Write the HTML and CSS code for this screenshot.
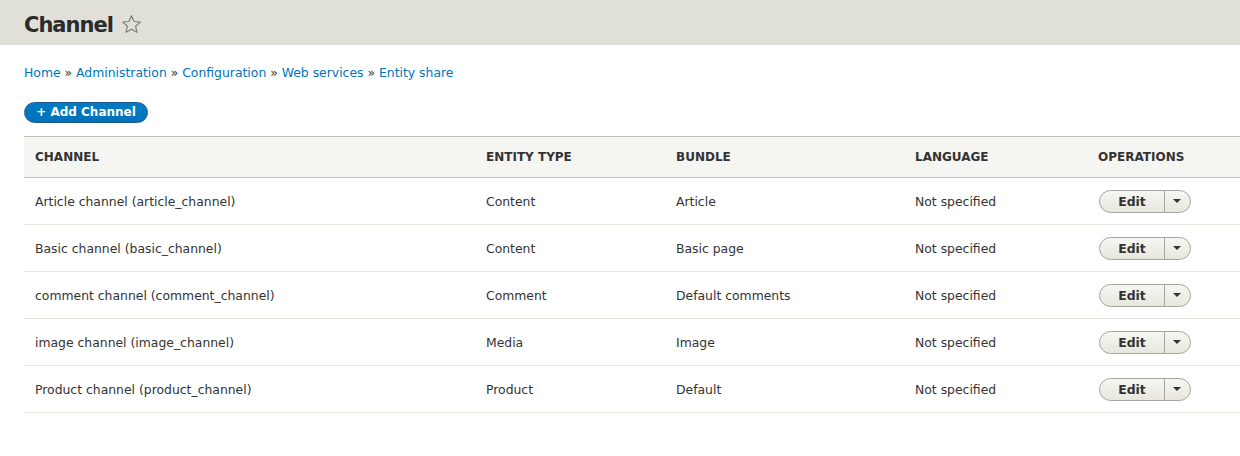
FILE: index.html
```html
<!DOCTYPE html>
<html>
<head>
<meta charset="utf-8">
<link rel="stylesheet" href="styles.css">
</head>
<body>
<header class="page-head">
  <h1 class="title">Channel</h1>
  <svg class="star" width="21" height="21" viewBox="0 0 20 20"><path d="M10 1.6l2.5 5.5 5.8.55-4.4 4 1.3 5.8L10 14.5 4.8 17.45l1.3-5.8-4.4-4 5.8-.55z" fill="none" stroke="#7d7d70" stroke-width="1.1" stroke-linejoin="round"/></svg>
</header>
<main class="content">
  <nav class="crumbs">
    <a href="#">Home</a> » <a href="#">Administration</a> » <a href="#">Configuration</a> » <a href="#">Web services</a> » <a href="#">Entity share</a>
  </nav>
  <div class="actions"><a class="btn-primary" href="#">+ Add Channel</a></div>
  <table class="list">
    <thead>
      <tr><th class="c1">Channel</th><th class="c2">Entity type</th><th class="c3">Bundle</th><th class="c4">Language</th><th class="c5">Operations</th></tr>
    </thead>
    <tbody>
      <tr><td>Article channel (article_channel)</td><td>Content</td><td>Article</td><td>Not specified</td><td><div class="drop"><span class="edit">Edit</span><span class="tog"></span></div></td></tr>
      <tr><td>Basic channel (basic_channel)</td><td>Content</td><td>Basic page</td><td>Not specified</td><td><div class="drop"><span class="edit">Edit</span><span class="tog"></span></div></td></tr>
      <tr><td>comment channel (comment_channel)</td><td>Comment</td><td>Default comments</td><td>Not specified</td><td><div class="drop"><span class="edit">Edit</span><span class="tog"></span></div></td></tr>
      <tr><td>image channel (image_channel)</td><td>Media</td><td>Image</td><td>Not specified</td><td><div class="drop"><span class="edit">Edit</span><span class="tog"></span></div></td></tr>
      <tr><td>Product channel (product_channel)</td><td>Product</td><td>Default</td><td>Not specified</td><td><div class="drop"><span class="edit">Edit</span><span class="tog"></span></div></td></tr>
    </tbody>
  </table>
</main>
</body>
</html>
```
FILE: styles.css
```css
html, body { margin: 0; padding: 0; background: #fff; }
body { font-family: "DejaVu Sans", "Liberation Sans", sans-serif; font-size: 12.4px; color: #333; }
.page-head { background: #e0e0d8; height: 45px; display: flex; align-items: center; padding: 5px 24px 0; box-sizing: border-box; }
.title { margin: 0; font-size: 21px; font-weight: bold; color: #2b2b2b; letter-spacing: -1px; }
.star { margin-left: 8px; margin-top: -2px; }
.content { padding: 0 0 0 24px; }
.crumbs { padding-top: 20px; height: 20px; font-size: 12.4px; color: #333; }
.crumbs a { color: #0074bd; text-decoration: none; }
.actions { margin-top: 17px; height: 20px; }
.btn-primary { display: inline-block; height: 21px; line-height: 19px; box-sizing: border-box; padding: 0; border-radius: 11px; background: linear-gradient(#007bc6, #0071b8); border: 1px solid #1e5c90; color: #fff; font-weight: bold; font-size: 12px; text-decoration: none; width: 124px; text-align: center; }
.list { margin-top: 14px; width: 100%; border-collapse: collapse; }
.list th { background: #f5f5f2; border-top: 1px solid #bfbfba; border-bottom: 1px solid #bfbfba; text-align: left; font-size: 12px; font-weight: bold; text-transform: uppercase; color: #333; height: 40px; padding: 0 0 0 11px; }
.list td { height: 46px; border-bottom: 1px solid #e6e4df; padding: 0 0 0 11px; font-size: 12.4px; color: #333; }
.c1 { width: 440px; }
.c2 { width: 179px; }
.c3 { width: 228px; }
.c4 { width: 172px; }
.drop { display: inline-flex; height: 23px; box-sizing: border-box; border: 1px solid #a6a6a0; border-radius: 12px; background: linear-gradient(#f6f6f3, #e7e7df); align-items: stretch; width: 92px; margin-left: 1px; vertical-align: middle; }
.edit { width: 64px; display: flex; align-items: center; justify-content: center; font-weight: bold; font-size: 12.4px; color: #333; border-right: 1px solid #a6a6a0; }
.tog { flex: 1; display: flex; align-items: center; justify-content: center; }
.tog::after { content: ""; border-left: 4px solid transparent; border-right: 4px solid transparent; border-top: 4px solid #333; margin-left: -2px; }
```
